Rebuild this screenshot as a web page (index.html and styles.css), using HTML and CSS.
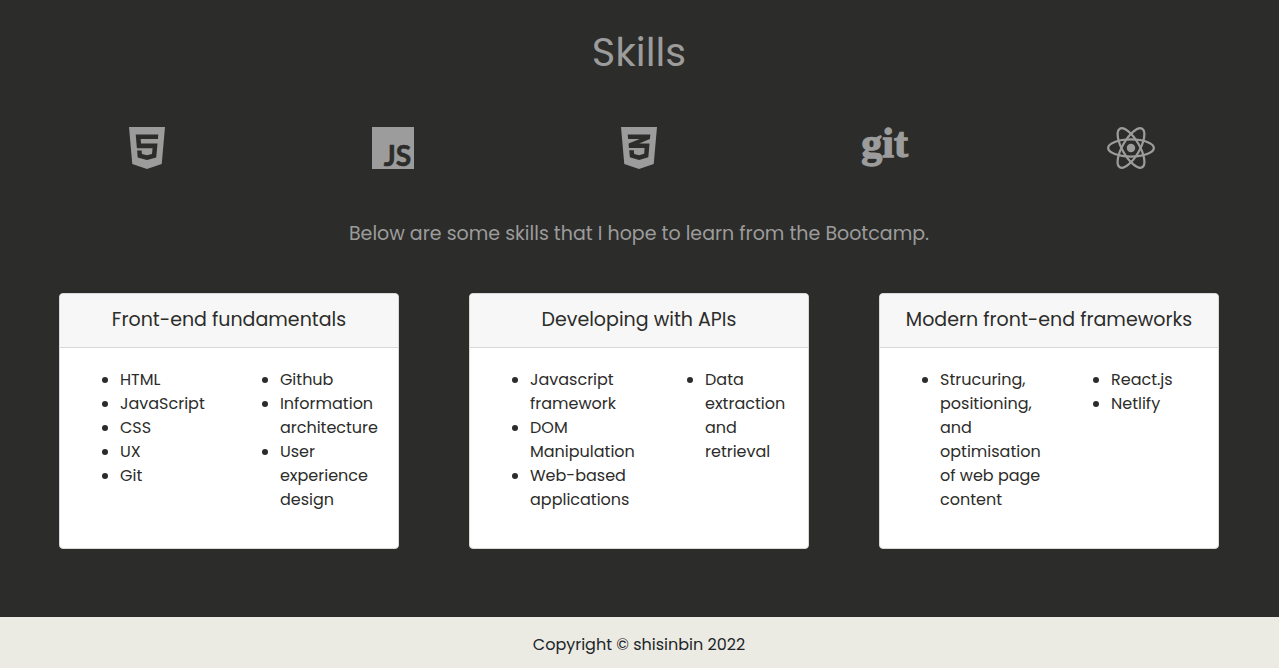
FILE: index.html
```html
<!DOCTYPE html>
<html lang="en">
<head>
  <meta charset="utf-8">
  <meta name="viewport" content="width=device-width, initial-scale=1">
  <title>Skills</title>
  <link rel="stylesheet" href="styles.css">
</head>
<body>
  <main class="skills">
    <h1 class="skills-title">Skills</h1>
    <div class="icons">
      <svg class="icon" viewBox="0 0 384 512" role="img" aria-label="HTML5"><path d="M0 32l34.900 395.800L191.500 480l157.600-52.200L384 32H0zm308.200 127.900H124.400l4.100 49.400h175.600l-13.600 148.400-97.900 27v.3h-1.100l-98.700-27.300-6-75.800h47.700L138 320l53.500 14.500 53.700-14.500 6-62.200H84.300L71.500 112.200h241.100l-4.400 47.700z"/></svg>
      <svg class="icon" viewBox="0 0 448 512" role="img" aria-label="JavaScript"><path d="M0 32h448v448H0z"/><text class="js-mark" x="418" y="446" text-anchor="end">JS</text></svg>
      <svg class="icon" viewBox="0 0 384 512" role="img" aria-label="CSS3"><path d="M0 32l34.900 395.800L192 480l157.100-52.200L384 32H0zm313.100 80l-4.800 47.300L193 208.600l-.3.1h111.500l-12.800 146.600-98.200 28.700-98.800-29.200-6.400-73.900h48.900l3.200 38.300 52.600 13.300 54.700-15.400 3.700-61.600-166.300-.5v-.1l-.2.1-3.600-46.300L193.100 162l6.500-2.700H76.700L70.900 112h242.200z"/></svg>
      <svg class="icon icon-git" viewBox="0 0 512 512" role="img" aria-label="Git"><text class="git-mark" x="252" y="356" text-anchor="middle">git</text></svg>
      <svg class="icon" viewBox="0 0 512 512" role="img" aria-label="React">
        <g class="orbits">
          <ellipse cx="256" cy="256" rx="244" ry="91"/>
          <ellipse cx="256" cy="256" rx="238" ry="91" transform="rotate(60 256 256)"/>
          <ellipse cx="256" cy="256" rx="238" ry="91" transform="rotate(120 256 256)"/>
        </g>
        <circle cx="256" cy="256" r="45"/>
      </svg>
    </div>
    <p class="intro">Below are some skills that I hope to learn from the Bootcamp.</p>
    <div class="cards">
      <section class="card">
        <h2 class="card-header">Front-end fundamentals</h2>
        <div class="card-body card-body-even">
          <ul class="list"><li>HTML</li><li>JavaScript</li><li>CSS</li><li>UX</li><li>Git</li></ul>
          <ul class="list"><li>Github</li><li>Information architecture</li><li>User experience design</li></ul>
        </div>
      </section>
      <section class="card">
        <h2 class="card-header">Developing with APIs</h2>
        <div class="card-body card-body-wide">
          <ul class="list"><li>Javascript framework</li><li>DOM Manipulation</li><li>Web-based applications</li></ul>
          <ul class="list"><li>Data extraction and retrieval</li></ul>
        </div>
      </section>
      <section class="card">
        <h2 class="card-header">Modern front-end frameworks</h2>
        <div class="card-body card-body-mid">
          <ul class="list"><li>Strucuring, positioning, and optimisation of web page content</li></ul>
          <ul class="list"><li>React.js</li><li>Netlify</li></ul>
        </div>
      </section>
    </div>
  </main>
  <footer class="footer">Copyright © shisinbin 2022</footer>
</body>
</html>
```
FILE: styles.css
```css
* {
  box-sizing: border-box;
}

body {
  margin: 0;
  min-height: 100vh;
  display: flex;
  flex-direction: column;
  background: #2c2c2a;
  color: #2c2c2a;
  font-family: Poppins, Inter, "Open Sans", sans-serif;
  font-size: 16px;
  line-height: 24px;
}

.skills {
  flex: 1;
  padding: 28px 25px 68px 24px;
}

.skills-title {
  margin: 0;
  color: #9c9c9c;
  font-size: 40px;
  font-weight: 400;
  line-height: 48px;
  text-align: center;
}

.icons {
  display: grid;
  grid-template-columns: repeat(5, 1fr);
  justify-items: center;
  margin-top: 48px;
}

.icon {
  height: 48px;
  fill: #9c9c9c;
}

.icon-git {
  overflow: visible;
}

.js-mark {
  fill: #2c2c2a;
  font-family: Lato, sans-serif;
  font-size: 300px;
  font-weight: 700;
  stroke: #2c2c2a;
  stroke-width: 6px;
}

.git-mark {
  font-family: "Liberation Serif", serif;
  font-size: 448px;
  font-weight: 700;
  stroke: #9c9c9c;
  stroke-width: 14px;
}

.orbits {
  fill: none;
  stroke: #9c9c9c;
  stroke-width: 24px;
}

.intro {
  margin: 50px 0 0;
  color: #9c9c9c;
  font-size: 19px;
  text-align: center;
}

.cards {
  display: grid;
  grid-template-columns: repeat(3, 1fr);
  gap: 70px;
  margin: 47px 35px 0;
}

.card {
  background: #fff;
  border: 1px solid #d8d8d8;
  border-radius: 4px;
}

.card-header {
  margin: 0;
  padding: 14px 16px 15px;
  border-bottom: 1px solid #d8d8d8;
  border-radius: 3px 3px 0 0;
  background: #f7f7f7;
  font-size: 19px;
  font-weight: 400;
  line-height: 24px;
  text-align: center;
}

.card-body {
  display: grid;
  padding: 20px 20px 36px;
}

.card-body-even {
  grid-template-columns: 160fr 138fr;
}

.card-body-wide {
  grid-template-columns: 175fr 123fr;
}

.card-body-mid {
  grid-template-columns: 171fr 127fr;
}

.list {
  margin: 0;
  padding-left: 40px;
}

.list:first-child {
  padding-right: 24px;
}

.footer {
  padding: 16px 17px 11px 16px;
  background: #ebebe3;
  color: #212529;
  text-align: center;
}
```
